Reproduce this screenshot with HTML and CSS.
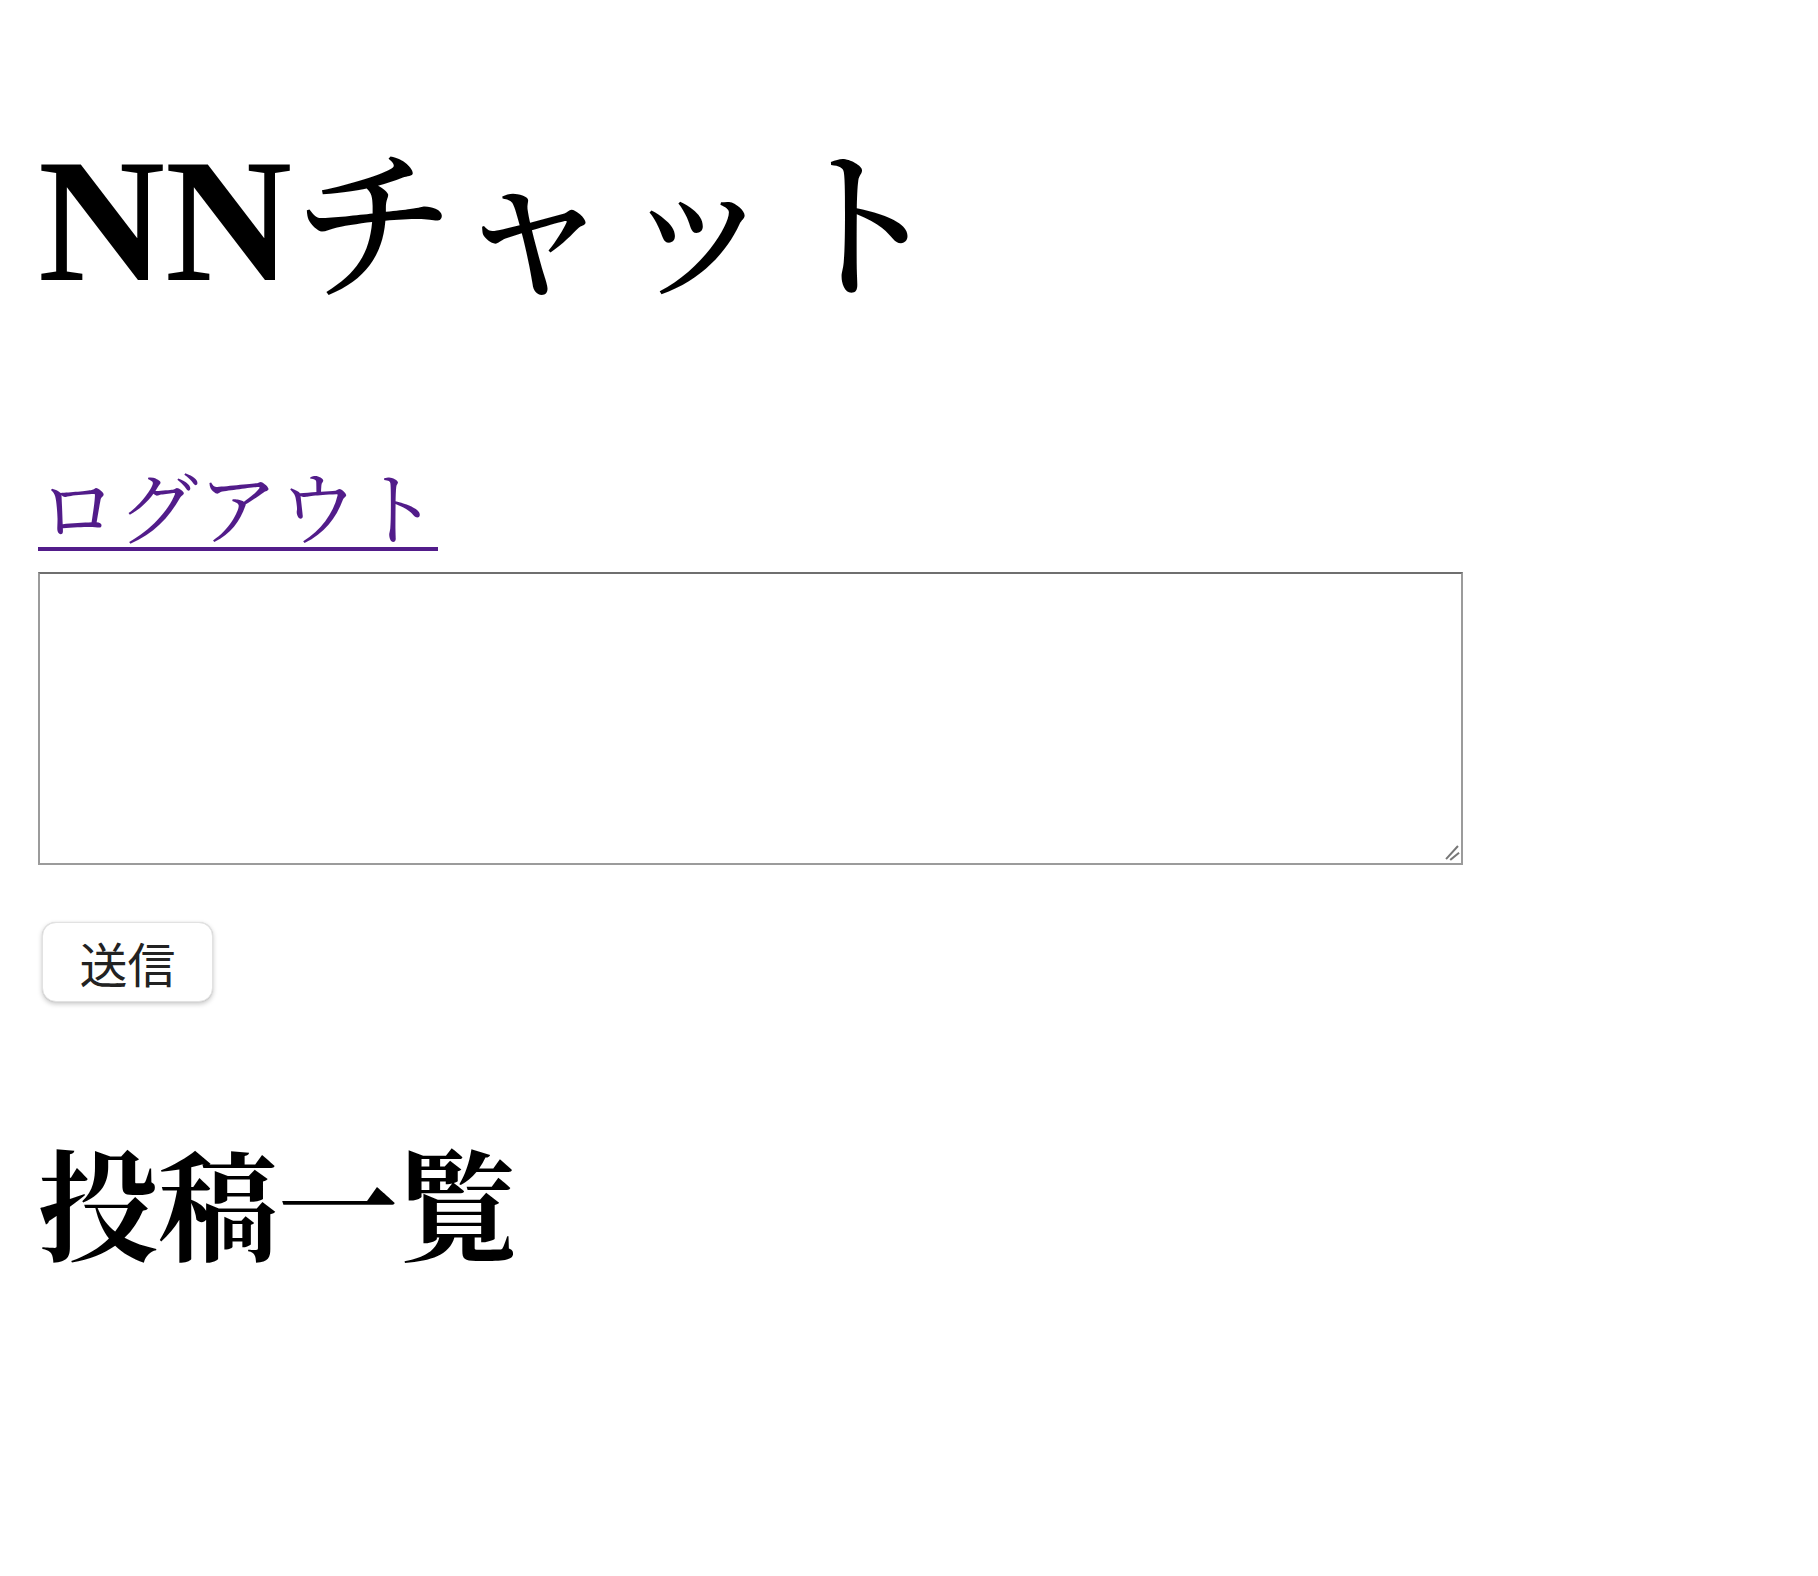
FILE: index.html
```html
<!DOCTYPE html>
<html lang="ja">
<head>
<meta charset="utf-8">
<title>NNチャット</title>
<link rel="stylesheet" href="styles.css">
</head>
<body>
<main class="page">
  <h1 class="title"><span class="title-latin">NN</span><span class="title-kana">チャット</span></h1>
  <div class="logout-row"><a class="logout" href="#">ログアウト</a></div>
  <form class="post-form">
    <div class="message-wrap">
      <textarea class="message" name="message"></textarea>
      <svg class="grip" width="20" height="20" viewBox="0 0 20 20" aria-hidden="true">
        <line x1="4.7" y1="16.3" x2="15.3" y2="4.7" />
        <line x1="9" y1="17.3" x2="16.3" y2="11.3" />
      </svg>
    </div>
    <button class="send" type="button">送信</button>
  </form>
  <h2 class="list-title">投稿一覧</h2>
</main>
</body>
</html>
```
FILE: styles.css
```css
html, body {
  margin: 0;
  padding: 0;
  background: #ffffff;
}

.page {
  padding: 0 38px 200px 38px;
  font-family: "Liberation Serif", "Noto Serif CJK JP", "Noto Sans CJK JP", serif;
  color: #000;
}

.title {
  margin: 141px 0 0 0;
  font-size: 160px;
  line-height: 160px;
  height: 160px;
  font-weight: 700;
  white-space: nowrap;
}

.title-latin {
  font-size: 176px;
  font-weight: 700;
}

.title-kana {
  font-size: 164px;
  font-weight: 500;
  vertical-align: -5px;
}

.logout-row {
  margin-top: 170px;
  font-size: 80px;
  line-height: 80px;
  height: 80px;
}

.logout {
  color: #521c8a;
  text-decoration: underline;
  text-decoration-thickness: 4px;
  text-underline-offset: 9px;
  font-weight: 400;
}

.post-form {
  display: flex;
  flex-direction: column;
  align-items: flex-start;
  margin-top: 21px;
}

.message-wrap {
  position: relative;
  width: 1425px;
  height: 293px;
}

.message {
  display: block;
  box-sizing: border-box;
  width: 1425px;
  height: 293px;
  margin: 0;
  border: 2px solid #9b9b9b;
  border-top-color: #6f6f6f;
  background: #fff;
  padding: 4px;
  resize: none;
}

.grip {
  position: absolute;
  right: 1px;
  bottom: 3px;
  stroke: #777777;
  stroke-width: 2;
  stroke-linecap: square;
  pointer-events: none;
}

.send {
  box-sizing: border-box;
  margin: 57px 0 0 4px;
  width: 171px;
  height: 80px;
  border: 1px solid #e2e2e2;
  border-radius: 14px;
  background: #ffffff;
  box-shadow: 0 2px 5px rgba(0, 0, 0, 0.22), 0 0 1px rgba(0, 0, 0, 0.15);
  font-family: "Noto Sans CJK JP", "Noto Sans", sans-serif;
  font-size: 48px;
  line-height: 1;
  color: #222222;
  padding: 0;
}

.list-title {
  margin: 150px 0 0 0;
  font-size: 120px;
  line-height: 120px;
  font-weight: 700;
}
```
